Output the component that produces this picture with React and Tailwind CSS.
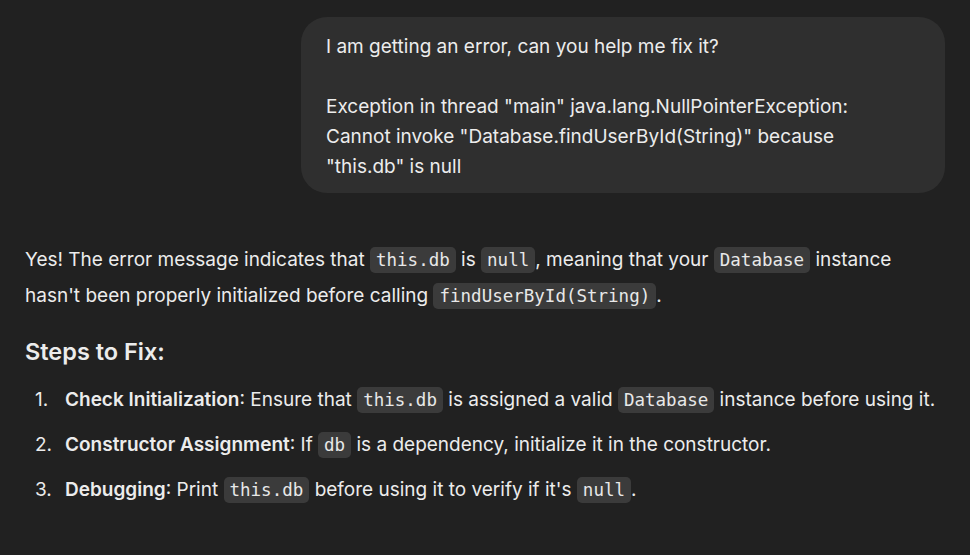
import React from 'react'

const Code = ({ children }) => (
  <code className="rounded-[5px] bg-[#3b3b3b] px-[6px] py-[3px] text-[17.5px] text-[#e8e8e8] [font-family:'DejaVu_Sans_Mono',monospace]">
    {children}
  </code>
)

const steps = [
  {
    title: 'Check Initialization',
    body: (
      <>
        Ensure that <Code>this.db</Code> is assigned a valid <Code>Database</Code> instance before using it.
      </>
    )
  },
  {
    title: 'Constructor Assignment',
    body: (
      <>
        If <Code>db</Code> is a dependency, initialize it in the constructor.
      </>
    )
  },
  {
    title: 'Debugging',
    body: (
      <>
        Print <Code>this.db</Code> before using it to verify if it's <Code>null</Code>.
      </>
    )
  }
]

export default function App() {
  return (
    <div className="min-h-[555px] w-full bg-[#212121] text-[#ececec] [font-family:Inter,'Noto_Sans',sans-serif]">
      <div className="w-[920px] ml-[25px] pt-[17px]">
        {/* User message */}
        <div className="flex justify-end">
          <div className="w-[644px] rounded-[26px] bg-[#2f2f2f] pl-[25px] pr-[60px] pt-[15px] pb-[11px] text-[19px] leading-[30px]">
            <p>I am getting an error, can you help me fix it?</p>
            <p className="mt-[30px]">
              Exception in thread "main" java.lang.NullPointerException: Cannot invoke
              "Database.findUserById(String)" because "this.db" is null
            </p>
          </div>
        </div>

        {/* Assistant reply */}
        <div className="mt-[49px] text-[19px] leading-[36px]">
          <p>
            Yes! The error message indicates that <Code>this.db</Code> is <Code>null</Code>, meaning that your{' '}
            <Code>Database</Code> instance hasn't been properly initialized before calling{' '}
            <Code>findUserById(String)</Code>.
          </p>

          <h3 className="mt-[22px] text-[23.5px] font-semibold leading-[32px]">Steps to Fix:</h3>

          <ol className="mt-[14px] flex flex-col gap-[9px]">
            {steps.map((step, i) => (
              <li key={i} className="flex">
                <span className="w-[40px] shrink-0 pl-[10px]">{i + 1}.</span>
                <span className="w-[890px]">
                  <strong className="font-semibold">{step.title}</strong>: {step.body}
                </span>
              </li>
            ))}
          </ol>
        </div>
      </div>
    </div>
  )
}
